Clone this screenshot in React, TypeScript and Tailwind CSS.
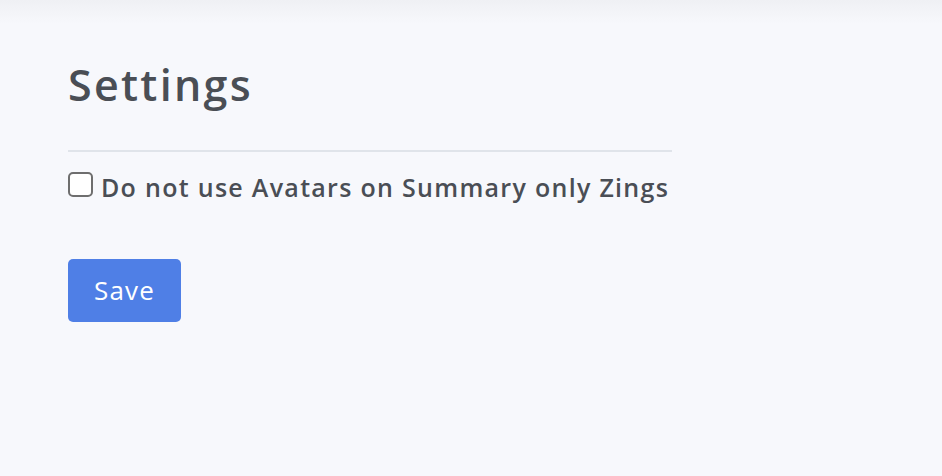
export default function App() {
  return (
    <div className="min-h-[476px] bg-[#f7f8fc] text-[#4a4e55]" style={{ fontFamily: '"Open Sans", "Noto Sans", sans-serif' }}>
      <div className="h-6 bg-gradient-to-b from-[#eff0f4] to-[#f7f8fc]" />
      <div className="px-[68px] pt-[36px]">
        <div className="w-[604px]">
          <h1 className="text-[43px] font-semibold leading-[50px] tracking-[2.3px]">Settings</h1>
          <div className="mt-[40px] h-[2px] bg-[#e0e4ea]" />
          <label className="mt-[19px] flex items-start gap-[8px] text-[25px] font-semibold leading-[32px] tracking-[1.3px]">
            <input
              type="checkbox"
              className="mt-px h-[25px] w-[25px] shrink-0 appearance-none rounded-[5px] border-2 border-[#6e6e6e] bg-white"
            />
            <span className="whitespace-nowrap">Do not use Avatars on Summary only Zings</span>
          </label>
        </div>
        <button className="mt-[56px] flex h-[63px] w-[113px] items-center justify-center rounded-[5px] bg-[#4f7fe6] text-[26px] font-medium tracking-[1.2px] text-white">
          Save
        </button>
      </div>
    </div>
  );
}
